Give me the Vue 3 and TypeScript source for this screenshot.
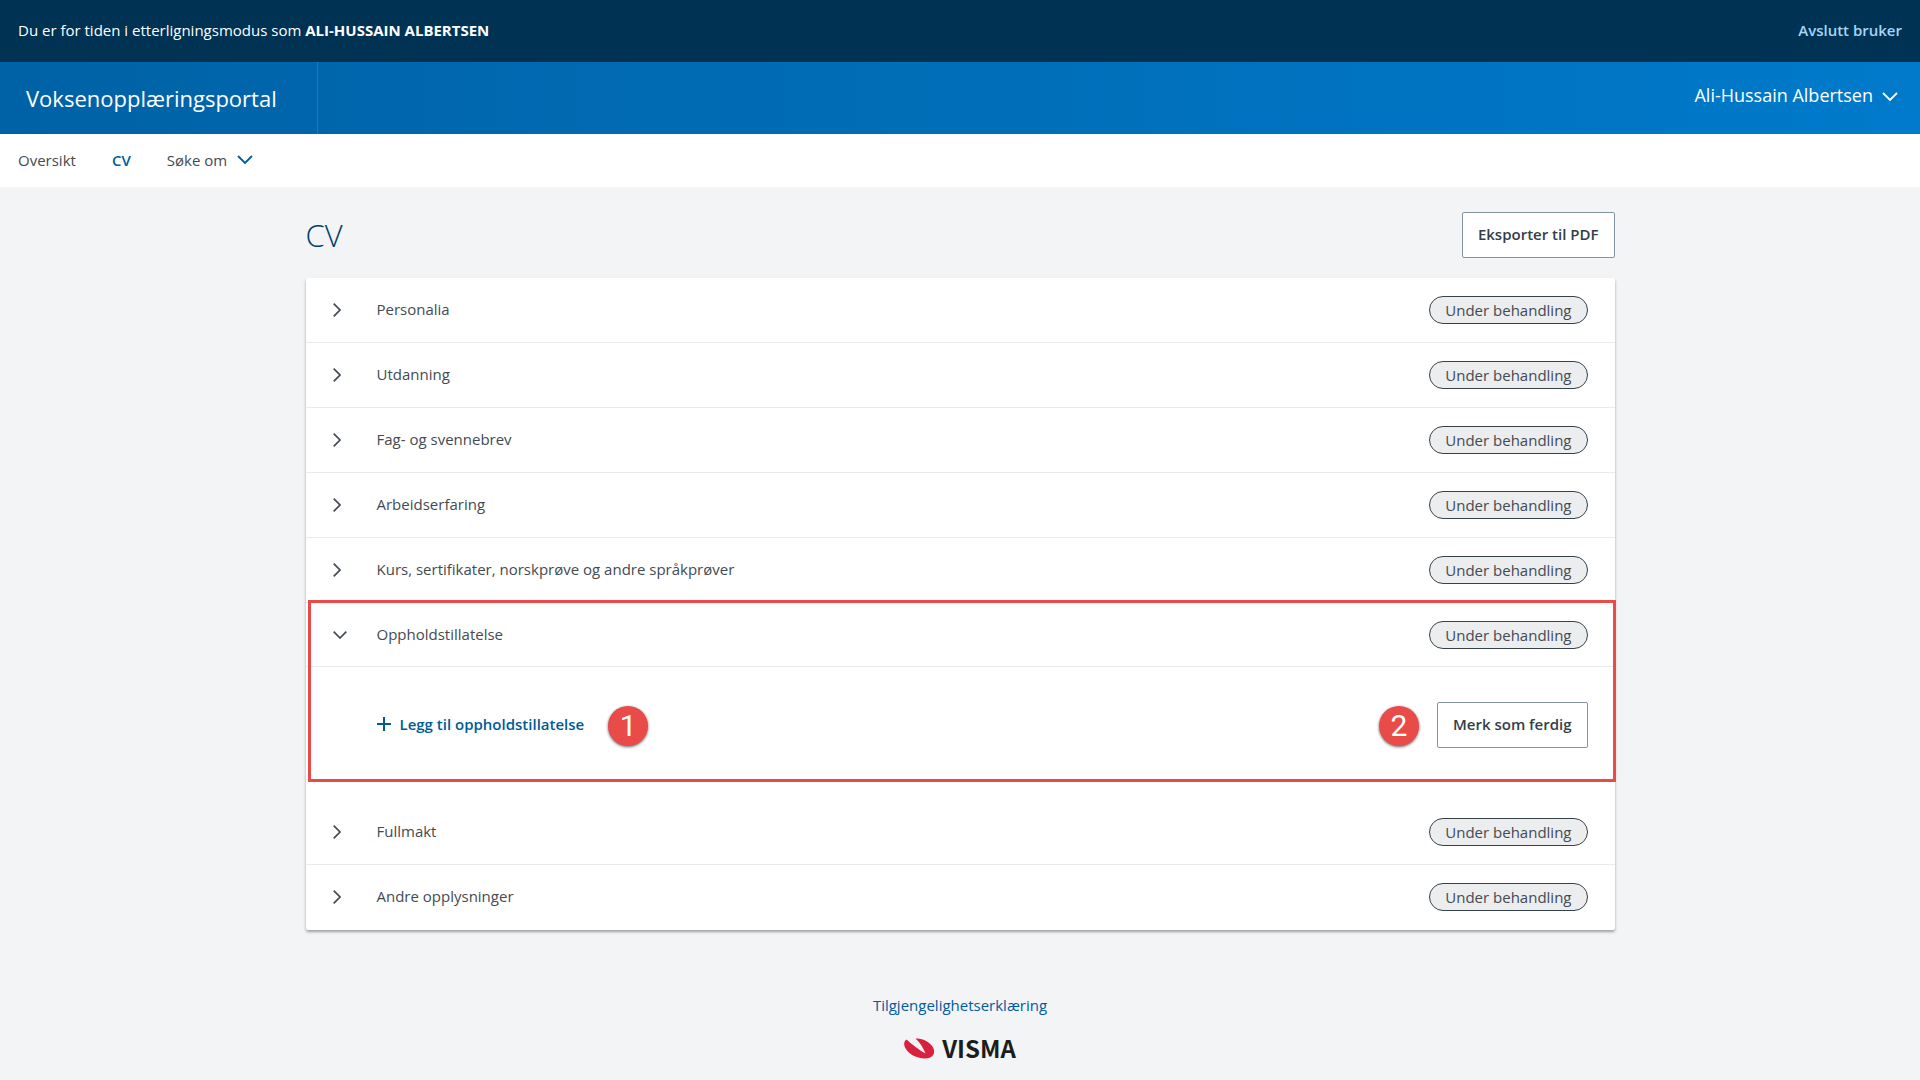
<script setup lang="ts">
import { ref } from 'vue'

interface Section {
  id: string
  title: string
  status: string
}

const userName = 'Ali-Hussain Albertsen'

const sections: Section[] = [
  { id: 'personalia', title: 'Personalia', status: 'Under behandling' },
  { id: 'utdanning', title: 'Utdanning', status: 'Under behandling' },
  { id: 'fagbrev', title: 'Fag- og svennebrev', status: 'Under behandling' },
  { id: 'arbeid', title: 'Arbeidserfaring', status: 'Under behandling' },
  { id: 'kurs', title: 'Kurs, sertifikater, norskprøve og andre språkprøver', status: 'Under behandling' },
  { id: 'opphold', title: 'Oppholdstillatelse', status: 'Under behandling' },
  { id: 'fullmakt', title: 'Fullmakt', status: 'Under behandling' },
  { id: 'andre', title: 'Andre opplysninger', status: 'Under behandling' },
]

const openId = ref<string>('opphold')

function toggle(id: string): void {
  openId.value = openId.value === id ? '' : id
}
</script>

<template>
  <div class="page">
    <div class="impersonation">
      <span>Du er for tiden i etterligningsmodus som <strong>{{ userName.toUpperCase() }}</strong></span>
      <a href="#" class="stop">Avslutt bruker</a>
    </div>

    <header class="topbar">
      <a href="#" class="brand">Voksenopplæringsportal</a>
      <button type="button" class="user">
        {{ userName }}
        <svg width="16" height="10" viewBox="0 0 16 10" aria-hidden="true">
          <path d="M1 1l7 7 7-7" fill="none" stroke="currentColor" stroke-width="1.8" />
        </svg>
      </button>
    </header>

    <nav class="menu">
      <a href="#">Oversikt</a>
      <a href="#" class="active">CV</a>
      <button type="button">
        Søke om
        <svg width="16" height="10" viewBox="0 0 16 10" aria-hidden="true">
          <path d="M1 1l7 7 7-7" fill="none" stroke="#005b9f" stroke-width="1.8" />
        </svg>
      </button>
    </nav>

    <main class="content">
      <div class="heading">
        <h1>CV</h1>
        <button type="button" class="btn">Eksporter til PDF</button>
      </div>

      <div class="card">
        <section v-for="s in sections" :key="s.id" class="item" :class="{ open: s.id === openId }">
          <button type="button" class="row" :aria-expanded="s.id === openId" @click="toggle(s.id)">
            <span class="arrow">
              <svg v-if="s.id === openId" width="14" height="8" viewBox="0 0 14 8" aria-hidden="true">
                <path d="M.7.7L7 7 13.3.7" fill="none" stroke="currentColor" stroke-width="1.7" />
              </svg>
              <svg v-else width="8" height="14" viewBox="0 0 8 14" aria-hidden="true">
                <path d="M.7.7L7 7 .7 13.3" fill="none" stroke="currentColor" stroke-width="1.7" />
              </svg>
            </span>
            <span class="title">{{ s.title }}</span>
            <span class="badge">{{ s.status }}</span>
          </button>
          <div v-if="s.id === openId" class="panel">
            <span class="anchor">
              <button type="button" class="add">
                <svg width="14" height="14" viewBox="0 0 14 14" aria-hidden="true">
                  <path d="M7 0v14M0 7h14" stroke="currentColor" stroke-width="2" />
                </svg>
                Legg til oppholdstillatelse
              </button>
              <span class="marker after">1</span>
            </span>
            <span class="anchor">
              <span class="marker before">2</span>
              <button type="button" class="btn">Merk som ferdig</button>
            </span>
          </div>
        </section>
      </div>
    </main>

    <footer class="footer">
      <a href="#">Tilgjengelighetserklæring</a>
      <div class="logo">
        <svg width="31" height="21" viewBox="0 0 31 21" aria-hidden="true">
          <path
            d="M2.500 1.500C7 5.500 15 12 21.500 15.500C19 10 16 4.500 11.500 .6C18 -.3 25.500 3.800 28.800 9C32 14.500 29.500 20.500 21 20.500C12 20.500 3.500 15.500 .8 9C-.5 5.500 .3 2.700 2.500 1.500Z"
            fill="#d9213f"
          />
        </svg>
        <span class="wordmark">VISMA</span>
      </div>
    </footer>
  </div>
</template>

<style>
body {
  background: #f3f4f6;
}
</style>

<style scoped>
.page {
  font-family: 'Open Sans', 'Noto Sans', sans-serif;
  font-size: 15px;
  line-height: 20px;
  color: #434b52;
}

a {
  color: inherit;
  text-decoration: none;
}

button {
  font: inherit;
  color: inherit;
  background: none;
  border: 0;
  padding: 0;
  cursor: pointer;
}

.impersonation {
  display: flex;
  align-items: center;
  justify-content: space-between;
  height: 62px;
  padding: 0 18px 2px;
  box-sizing: border-box;
  background: #003253;
  color: #fff;
}

.impersonation strong {
  font-weight: 700;
}

.stop {
  color: #a6d5fa;
  font-weight: 600;
}

.topbar {
  display: flex;
  align-items: stretch;
  justify-content: space-between;
  height: 72px;
  background: linear-gradient(90deg, #0062a6, #007acb);
  color: #fff;
}

.brand {
  display: flex;
  align-items: center;
  padding: 0 40px 0 26px;
  border-right: 1px solid #2379b5;
  font-size: 22px;
}

.user {
  display: flex;
  align-items: center;
  gap: 9px;
  padding: 0 22px 6px 0;
  font-size: 18px;
}

.user svg {
  margin-top: 4px;
}

.menu {
  display: flex;
  align-items: center;
  gap: 36px;
  height: 53px;
  padding: 0 18px 2px;
  box-sizing: border-box;
  background: #fff;
}

.menu .active {
  color: #005b9f;
  font-weight: 600;
}

.menu button {
  display: flex;
  align-items: center;
  gap: 10px;
}

.content {
  max-width: 1309px;
  margin: 0 auto;
}

.heading {
  display: flex;
  align-items: center;
  justify-content: space-between;
  padding: 25px 0 20px;
}

h1 {
  margin: 0;
  color: #003e6b;
  font-size: 31px;
  line-height: 42px;
  font-weight: 300;
}

.btn {
  height: 46px;
  padding: 0 15px 2px;
  border: 1px solid #8293a3;
  border-radius: 2px;
  background: #fff;
  color: #323e48;
  font-weight: 600;
}

.card {
  background: #fff;
  border-radius: 2px;
  box-shadow: 0 2px 3px rgba(0, 0, 0, 0.35);
}

.item {
  position: relative;
}

.row {
  display: flex;
  align-items: center;
  width: 100%;
  height: 65px;
  padding: 0 27px;
  border-bottom: 1px solid #e8eaeb;
  text-align: left;
}

.open .row {
  height: 64px;
}

.item:last-child .row {
  border-bottom-color: transparent;
}

.arrow {
  display: flex;
  width: 44px;
}

.title {
  flex: 1;
  padding-bottom: 2px;
}

.badge {
  padding: 3px 15px;
  border: 1px solid #36424a;
  border-radius: 14px;
  background: #ecedee;
}

.panel {
  display: flex;
  justify-content: space-between;
  padding: 35px 27px 52px 71px;
}

.anchor {
  position: relative;
  display: flex;
  align-items: center;
}

.add {
  display: flex;
  align-items: center;
  gap: 9px;
  padding-bottom: 2px;
  color: #005b94;
  font-weight: 600;
}

.open::after {
  content: '';
  position: absolute;
  inset: -3px -1px 18px 2px;
  border: 3px solid #e94b49;
  pointer-events: none;
}

.marker {
  position: absolute;
  top: 4px;
  width: 40px;
  height: 40px;
  border-radius: 50%;
  background: #e94b49;
  box-shadow: 0 1px 3px rgba(0, 0, 0, 0.6);
  color: #fff;
  font: 30px/40px Roboto, sans-serif;
  text-align: center;
}

.after {
  left: calc(100% + 24px);
}

.before {
  right: calc(100% + 18px);
}

.footer {
  display: flex;
  flex-direction: column;
  align-items: center;
  gap: 22px;
  padding: 65px 0 20px;
}

.footer a {
  color: #005b9f;
}

.logo {
  display: flex;
  align-items: center;
  gap: 7px;
}

.wordmark {
  color: #1d1d1b;
  font: 700 24px/22px 'Noto Sans CJK JP', Lato, sans-serif;
}
</style>
